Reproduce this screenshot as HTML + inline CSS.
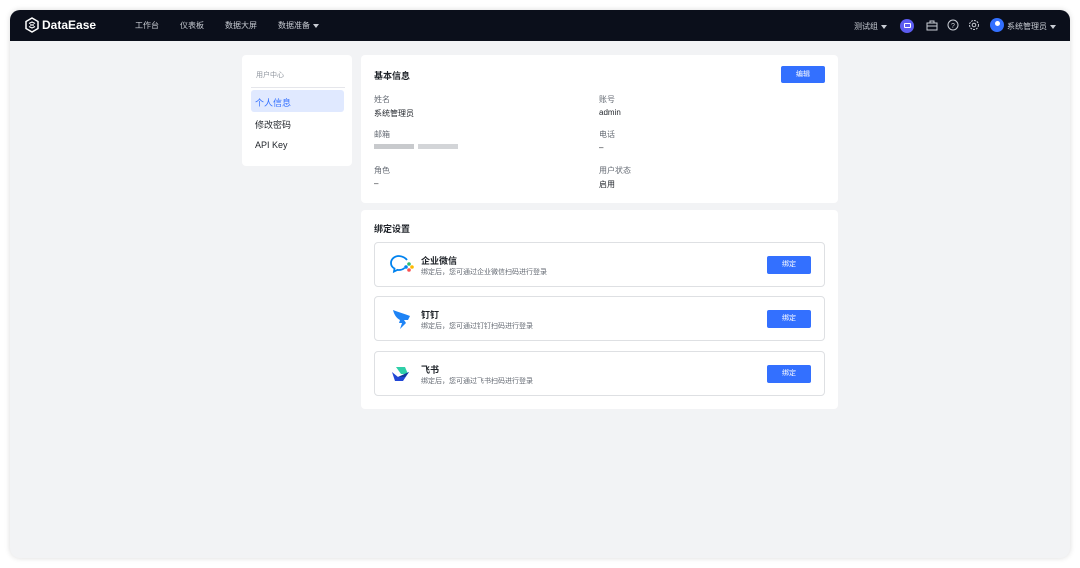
<!DOCTYPE html>
<html><head><meta charset="utf-8"><style>
*{margin:0;padding:0;box-sizing:border-box}
body{width:1080px;height:568px;background:#fff;font-family:"Liberation Sans","Noto Sans CJK SC",sans-serif;position:relative;overflow:hidden;color:#1f2329}
.win{position:absolute;left:10px;top:10px;width:1060px;height:548px;border-radius:10px;background:#f2f3f5;overflow:hidden;box-shadow:0 0 6px rgba(0,0,0,.15)}
.nav{position:absolute;left:0;top:0;width:1060px;height:31px;background:#0b0f1b;color:#c9cdd4;font-size:8px}
.abs{position:absolute}
.card{position:absolute;background:#fff;border-radius:4px}
.lbl{font-size:8px;color:#646a73}
.val{font-size:8px;color:#1f2329}
.item{position:absolute;left:13px;width:451px;height:45px;border:1px solid #dee0e3;border-radius:4px;background:#fff}
.btn{position:absolute;background:#3370ff;color:#fff;font-size:7px;text-align:center;border-radius:2px}
.tri{display:inline-block;width:0;height:0;border-left:3px solid transparent;border-right:3px solid transparent;border-top:4px solid #c9cdd4;vertical-align:middle;margin-left:3px}
</style></head><body>
<div class="win">
<div class="nav">
  <svg class="abs" style="left:14px;top:7px" width="16" height="16" viewBox="0 0 16 16"><path d="M8 1L14 4.5V11.5L8 15L2 11.5V4.5Z" fill="none" stroke="#fff" stroke-width="1.5"/><path d="M5 6.5L8 5L11 6.5M5 9.5L8 11L11 9.5M6 8H10" stroke="#fff" stroke-width="1.2" fill="none"/></svg>
  <div class="abs" style="left:32px;top:8px;font-size:12px;font-weight:bold;color:#fff">DataEase</div>
  <div class="abs" style="left:125px;top:10px">工作台</div>
  <div class="abs" style="left:170px;top:10px">仪表板</div>
  <div class="abs" style="left:215px;top:10px">数据大屏</div>
  <div class="abs" style="left:268px;top:10px">数据准备<span class="tri"></span></div>
  <div class="abs" style="left:844px;top:11px">测试组<span class="tri"></span></div>
  <div class="abs" style="left:890px;top:9px;width:14px;height:14px;border-radius:7px;background:#5c5cf0"><div style="margin:4px auto;width:7px;height:5px;border:1.2px solid #fff;border-radius:1px"></div></div>
  <svg class="abs" style="left:916px;top:10px" width="12" height="11" viewBox="0 0 12 11"><rect x="1" y="3" width="10" height="7" fill="none" stroke="#c9cdd4"/><path d="M4 3V1H8V3M1 6H11" stroke="#c9cdd4" fill="none"/></svg>
  <svg class="abs" style="left:937px;top:9px" width="12" height="12" viewBox="0 0 12 12"><circle cx="6" cy="6" r="5" fill="none" stroke="#c9cdd4"/><text x="6" y="9" font-size="7" fill="#c9cdd4" text-anchor="middle">?</text></svg>
  <svg class="abs" style="left:958px;top:9px" width="12" height="12" viewBox="0 0 12 12"><circle cx="6" cy="6" r="4.5" fill="none" stroke="#c9cdd4" stroke-dasharray="2 1"/><circle cx="6" cy="6" r="1.8" fill="none" stroke="#c9cdd4"/></svg>
  <div class="abs" style="left:980px;top:8px;width:14px;height:14px;border-radius:7px;background:#3370ff"><div style="margin:3px auto 0;width:5px;height:5px;border-radius:3px;background:#fff"></div></div>
  <div class="abs" style="left:997px;top:11px">系统管理员<span class="tri"></span></div>
</div>

<div class="card" style="left:232px;top:45px;width:110px;height:111px">
  <div class="abs" style="left:14px;top:15px;font-size:7px;color:#8f959e">用户中心</div>
  <div class="abs" style="left:9px;top:32px;width:94px;height:1px;background:#e5e6eb"></div>
  <div class="abs" style="left:9px;top:35px;width:93px;height:22px;background:#e0e9ff;border-radius:3px"></div>
  <div class="abs" style="left:13px;top:41px;font-size:9px;color:#3370ff">个人信息</div>
  <div class="abs" style="left:13px;top:63px;font-size:9px">修改密码</div>
  <div class="abs" style="left:13px;top:85px;font-size:9px">API Key</div>
</div>

<div class="card" style="left:351px;top:45px;width:477px;height:148px">
  <div class="abs" style="left:13px;top:14px;font-size:9px;font-weight:bold">基本信息</div>
  <div class="btn" style="left:420px;top:11px;width:44px;height:17px;line-height:17px">编辑</div>
  <div class="abs lbl" style="left:13px;top:39px">姓名</div>
  <div class="abs val" style="left:13px;top:53px">系统管理员</div>
  <div class="abs lbl" style="left:238px;top:39px">账号</div>
  <div class="abs val" style="left:238px;top:53px">admin</div>
  <div class="abs lbl" style="left:13px;top:74px">邮箱</div>
  <div class="abs" style="left:13px;top:89px;width:40px;height:5px;background:#c8cacd"></div>
  <div class="abs" style="left:57px;top:89px;width:40px;height:5px;background:#d3d5d8"></div>
  <div class="abs lbl" style="left:238px;top:74px">电话</div>
  <div class="abs val" style="left:238px;top:88px">–</div>
  <div class="abs lbl" style="left:13px;top:110px">角色</div>
  <div class="abs val" style="left:13px;top:124px">–</div>
  <div class="abs lbl" style="left:238px;top:110px">用户状态</div>
  <div class="abs val" style="left:238px;top:124px">启用</div>
</div>

<div class="card" style="left:351px;top:200px;width:477px;height:199px">
  <div class="abs" style="left:13px;top:12px;font-size:9px;font-weight:bold">绑定设置</div>
  <div class="item" style="top:32px">
    <svg class="abs" style="left:14px;top:11px" width="26" height="22" viewBox="0 0 26 22"><path d="M10 2C5 2 2 5.5 2 9C2 11.5 3.5 13.5 5.5 14.5L5 17.5L8.5 15.8C9 16 9.5 16 10 16C12 16 14 15.3 15.5 14" fill="none" stroke="#0082ef" stroke-width="1.8"/><path d="M18 6C16.5 4 13.5 2.3 10 2" fill="none" stroke="#0082ef" stroke-width="1.8"/><circle cx="20" cy="10" r="1.8" fill="#2dbc6f"/><circle cx="23" cy="13" r="1.8" fill="#fdb900"/><circle cx="20" cy="16" r="1.8" fill="#fa5151"/><circle cx="17" cy="13" r="1.8" fill="#0082ef"/></svg>
    <div class="abs" style="left:46px;top:11px;font-size:9px;font-weight:bold">企业微信</div>
    <div class="abs" style="left:46px;top:24px;font-size:7px;color:#646a73">绑定后，您可通过企业微信扫码进行登录</div>
    <div class="btn" style="left:392px;top:13px;width:44px;height:18px;line-height:18px">绑定</div>
  </div>
  <div class="item" style="top:86px">
    <svg class="abs" style="left:17px;top:10px" width="20" height="24" viewBox="0 0 20 24"><path d="M1 3C6 5 13 7 18 9L16 13L12 13L14 16L8 22L10 16L7 16L8 13C4 11 2 7 1 3Z" fill="#1e83f5"/></svg>
    <div class="abs" style="left:46px;top:11px;font-size:9px;font-weight:bold">钉钉</div>
    <div class="abs" style="left:46px;top:24px;font-size:7px;color:#646a73">绑定后，您可通过钉钉扫码进行登录</div>
    <div class="btn" style="left:392px;top:13px;width:44px;height:18px;line-height:18px">绑定</div>
  </div>
  <div class="item" style="top:141px">
    <svg class="abs" style="left:16px;top:13px" width="20" height="18" viewBox="0 0 20 18"><path d="M5 2H14L17 9H10Z" fill="#2fcfa8"/><path d="M1 7L7 12L18 7L12 16L4 16Z" fill="#2147d6"/><path d="M7 12L18 7L14 12Z" fill="#133c9a"/></svg>
    <div class="abs" style="left:46px;top:11px;font-size:9px;font-weight:bold">飞书</div>
    <div class="abs" style="left:46px;top:24px;font-size:7px;color:#646a73">绑定后，您可通过飞书扫码进行登录</div>
    <div class="btn" style="left:392px;top:13px;width:44px;height:18px;line-height:18px">绑定</div>
  </div>
</div>
</div>
</body></html>
